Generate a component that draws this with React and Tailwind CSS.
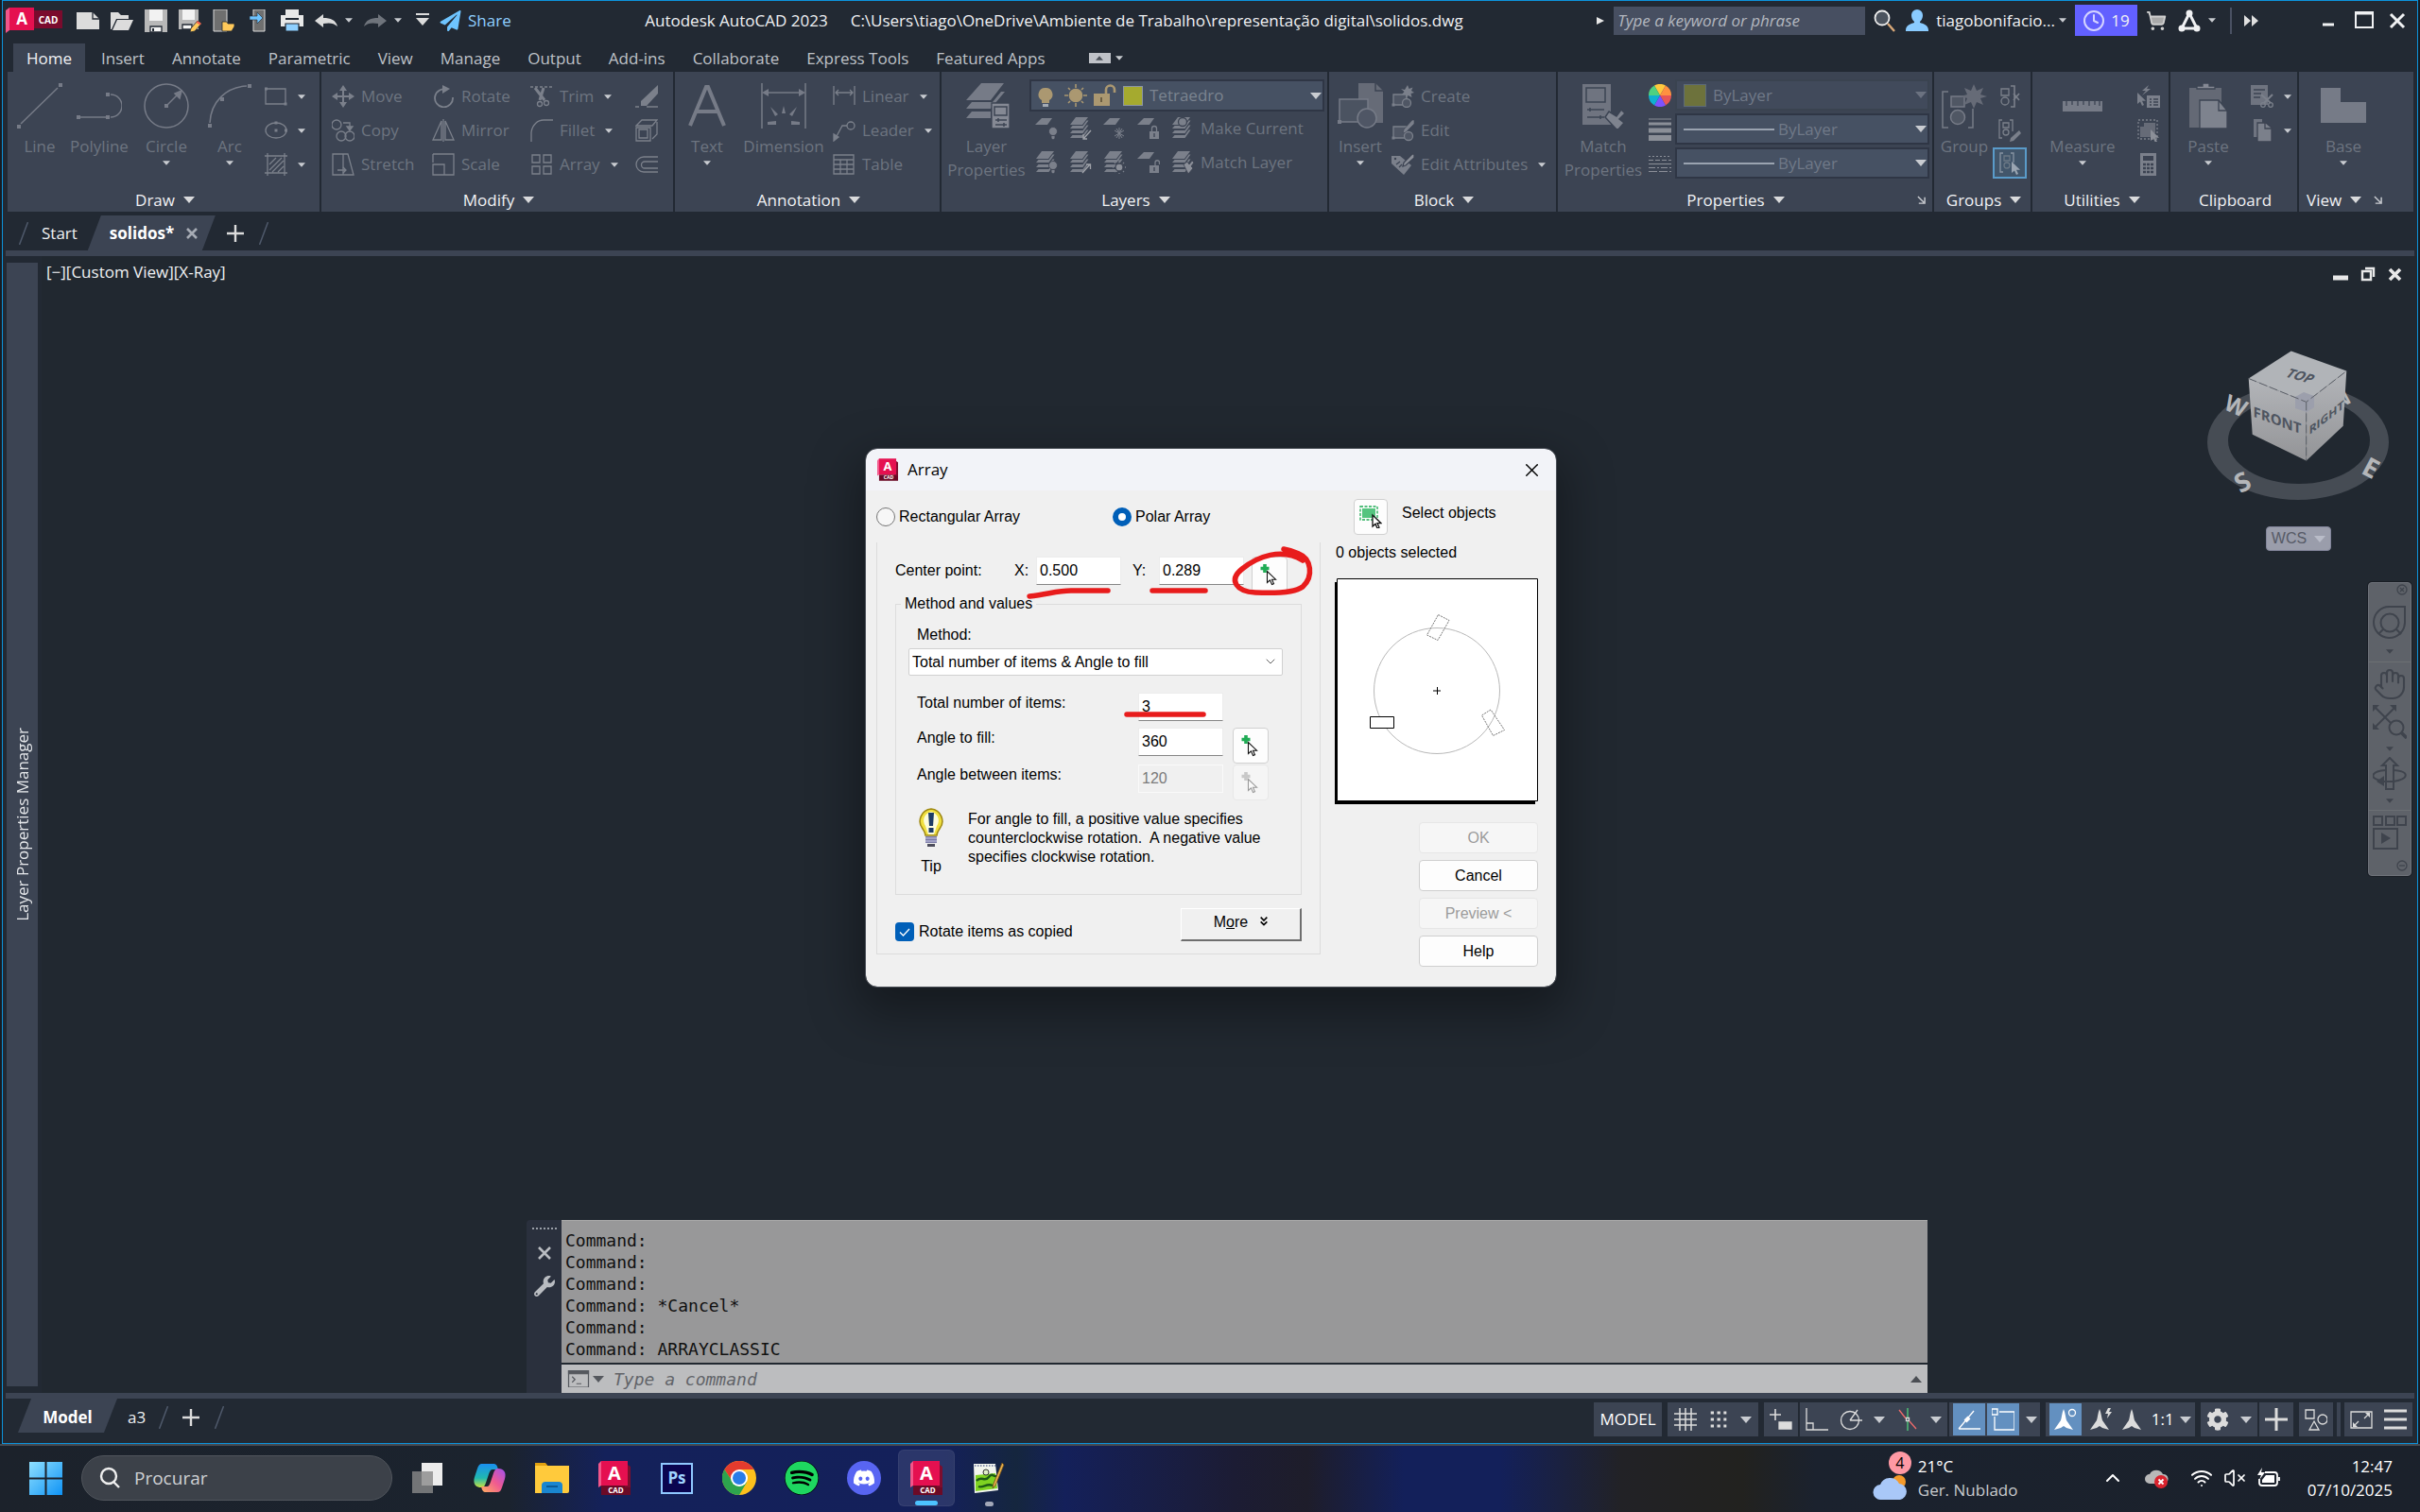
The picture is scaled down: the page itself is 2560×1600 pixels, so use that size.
import { ChevronDown, ChevronUp, Clock, Hand, ShoppingCart, Wifi, VolumeX, X } from 'lucide-react'
import { FaDiscord, FaSpotify, FaCog, FaPaperPlane, FaWrench } from 'react-icons/fa'

/* ---------- small pieces ---------- */

function Caret({ className = 'text-[#c9ccd1]', big }) {
  return (
    <svg viewBox="0 0 12 7" className={`shrink-0 ${big ? 'w-3 h-[7px]' : 'w-2 h-[5px]'} ${className}`} fill="currentColor">
      <path d="M0 0h12L6 7z" />
    </svg>
  )
}

function Ico({ s = 'w-6 h-6', box = 24, className = '', sw = 1.3, children }) {
  return (
    <svg viewBox={`0 0 ${box} ${box}`} className={`shrink-0 ${s} ${className}`} fill="none" stroke="currentColor" strokeWidth={sw}>
      {children}
    </svg>
  )
}

const Dot = ({ x, y, r = 1.5 }) => <rect x={x - r} y={y - r} width={r * 2} height={r * 2} fill="currentColor" stroke="none" />
const cursor = 'M0 0v12l3-2.6 2 4.6 2-.9-2-4.4h4z'

function Big({ label, label2, icon, caret, className }) {
  return (
    <button className={`flex flex-col items-center pt-1 text-[#6d7480] ${className}`}>
      <span className="h-12 flex items-center text-[#767b87]">{icon}</span>
      <span className="mt-[6px] leading-[25px] whitespace-nowrap">{label}</span>
      {label2 && <span className="leading-[25px] whitespace-nowrap">{label2}</span>}
      {caret && <Caret className="mt-[3px] text-[#c9ccd1]" />}
    </button>
  )
}

function Small({ icon, label, caret, name }) {
  return (
    <button aria-label={name} className="h-9 flex items-center gap-[7px] text-[#6d7480] whitespace-nowrap">
      <span className="text-[#7b808b]">{icon}</span>
      {label}
      {caret && <Caret className="ml-1 text-[#c9ccd1]" />}
    </button>
  )
}

function Panel({ title, className, caret = true, launcher, children }) {
  return (
    <section className={`flex flex-col border-r-2 border-[#222933] ${className}`}>
      <div className="flex items-start h-[122px] pt-2">{children}</div>
      <div className={`relative h-[26px] pt-px flex items-center justify-center gap-[9px] text-[#f0f1f3] ${launcher ? 'pr-5' : 'pl-[3px]'}`}>
        {title}
        {caret && <Caret big className="text-[#d9dadc]" />}
        {launcher && (
          <Ico s="w-[9px] h-[9px]" box={10} sw={1.6} className="absolute right-[7px] top-[9px] text-[#c9ccd1]">
            <path d="M1 1l7 7M9 2v7H2" />
          </Ico>
        )}
      </div>
    </section>
  )
}

/* ---------- layer icons ---------- */

const Sheet = ({ y = 1 }) => <path d={`M7 ${y}h11l-5 7H0z`} fill="currentColor" stroke="none" />
const Sheets = () => (
  <g fill="currentColor" stroke="none">
    <path d="M7 0h13l-6 8H1zM3.500 9h11l4-5.500h2l-6 8.500H1zM3.500 14h11l4-5.500h2l-6 8.500H1zM3.500 19h11l4-5.500h2l-6 8.500H1z" />
  </g>
)
const MiniBulb = () => (
  <g fill="#7b808b" stroke="#3c4352" strokeWidth=".8">
    <circle cx="19" cy="15" r="4.500" />
    <path d="M17 19.500h4v3l-2 1.500-2-1.500z" />
  </g>
)
const MiniLock = ({ open }) => (
  <g>
    <rect x="13" y="15" width="10" height="8" fill="currentColor" stroke="none" />
    <path d={open ? 'M19 15v-3a2.200 2.200 0 0 1 4.500 0v2' : 'M15.500 15v-3a2.500 2.500 0 0 1 5 0v3'} />
    <path d="M18 17v4" stroke="#3c4352" />
  </g>
)

const layerRow1 = [
  ['Off', <><Sheet /><MiniBulb /></>],
  ['Isolate', <><Sheets /><path d="M23 14l-8 9m0-5v5h4" stroke="#a0a3aa" /></>],
  ['Freeze', <><Sheet /><path d="M17 11v12M12 14l10 6M22 14l-10 6M14 12l6 10M20 12l-6 10" strokeWidth="1" /></>],
  ['Lock', <><Sheet /><MiniLock /></>],
]
const layerRow2 = [
  ['Turn all on', <><Sheets /><MiniBulb /></>],
  ['Unisolate', <><Sheets /><path d="M14 23l8-9m-4 0h4.500v5" stroke="#a0a3aa" /></>],
  ['Thaw all', <><Sheets /><circle cx="17" cy="17" r="4" fill="#8b8f98" stroke="#3c4352" /><path d="M17 9v2M17 23v1M10 17h1M23 17h1M12 12l1 1M21 21l1 1M22 12l-1 1M12 22l1-1" /></>],
  ['Unlock', <><Sheet /><MiniLock open /></>],
]

/* ---------- title bar ---------- */

function AcadMark({ className, cad = true }) {
  return (
    <svg viewBox="0 0 34 36" className={className}>
      <path d="M3 26h31v10H3z" fill="#6b0a26" />
      <path d="M28 2l6 4v22h-6z" fill="#7d0d2e" />
      <path d="M3 0h28v26H3z" fill="#e51050" />
      <path d="M3 0v26l-3 2V3z" fill="#f2568a" />
      <text x="17" y="20" textAnchor="middle" fontSize="20" fontWeight="700" fill="#fff" fontFamily="Open Sans, sans-serif">A</text>
      {cad && <text x="18.500" y="34" textAnchor="middle" fontSize="8" fontWeight="700" fill="#fff" fontFamily="Open Sans, sans-serif">CAD</text>}
    </svg>
  )
}

function TitleBar() {
  return (
    <header className="h-[45px] pb-1 flex items-center text-[#f0f1f3] shrink-0">
      <div className="flex items-start w-[78px] pl-[3px]">
        <svg viewBox="0 0 60 27" className="w-[60px] h-[27px]" aria-label="AutoCAD">
          <path d="M30 3h30v19H30z" fill="#7a0b2d" />
          <path d="M4 0h26v24H4z" fill="#e51050" />
          <path d="M0 3l4-3v24l-4 3z" fill="#f2568a" />
          <text x="17" y="18" textAnchor="middle" fontSize="17" fontWeight="700" fill="#fff" fontFamily="Open Sans, sans-serif">A</text>
          <text x="45" y="16.500" textAnchor="middle" fontSize="10" fontWeight="700" fill="#fff" fontFamily="Open Sans, sans-serif">CAD</text>
        </svg>
      </div>

      <div className="flex items-center gap-3 text-[#dcdcdc]">
        <button aria-label="New"><Ico><path d="M0 3h17l7 7v11H0z" fill="currentColor" stroke="none" /><path d="M17 3v7h7" stroke="#222933" /></Ico></button>
        <button aria-label="Open"><Ico><path d="M0 3h8l3 3h8v4H6L1 21H0zM7 11h17l-5 11H2z" fill="currentColor" stroke="none" /></Ico></button>
        <button aria-label="Save"><Ico><path d="M0 0h24v24H0z" fill="#b8b8b8" stroke="none" /><path d="M5 0h14v12H5z" fill="#f2f2f2" stroke="none" /><path d="M6 18h12v6H6z" fill="#f5f5f5" stroke="#222933" /><path d="M8 20h2v3H8z" fill="#222933" stroke="none" /></Ico></button>
        <button aria-label="Save as"><Ico><path d="M0 0h21v21H0z" fill="#b8b8b8" stroke="none" /><path d="M4 0h13v11H4z" fill="#f2f2f2" stroke="none" /><path d="M4 16h10v5H4z" fill="#f5f5f5" stroke="#222933" /><path d="M20 12l4 3-7 8-5 1 1-4z" fill="#ffc95a" stroke="#222933" strokeWidth=".8" /><path d="M20 12l4 3-1.500 1.500-4-2.800z" fill="#f2604f" stroke="none" /></Ico></button>
        <button aria-label="Open from mobile"><Ico><path d="M1 0h14v23H1z" fill="#6f6f6f" stroke="#dcdcdc" strokeWidth="1" /><path d="M10 13h5l1 2h7v3l-3 5H10z" fill="#ffc95a" stroke="#222933" strokeWidth=".8" /></Ico></button>
        <button aria-label="Save to mobile"><Ico><path d="M7 0h12v23H7z" fill="#6f6f6f" stroke="#dcdcdc" strokeWidth="1" /><path d="M3 7h8V3l6 6-6 6v-4H3z" fill="#6ec4ff" stroke="#222933" strokeWidth=".6" /></Ico></button>
        <button aria-label="Plot"><Ico><path d="M5 0h14v6H5zM0 6h24v12H0z" fill="#e8e8e8" stroke="none" /><path d="M5 9h14v2H5z" fill="#222933" stroke="none" /><path d="M5 15h14v8H5z" fill="#8fd0ff" stroke="#222933" strokeWidth="1.200" /></Ico></button>
        <div className="flex items-center gap-2">
          <button aria-label="Undo"><Ico><path d="M0 12l9-7v4c8 0 13 2 15 9-4-4-9-4-15-3v4z" fill="currentColor" stroke="none" /></Ico></button>
          <Caret />
        </div>
        <div className="flex items-center gap-2 text-[#6f747c]">
          <button aria-label="Redo"><Ico><path d="M24 12l-9-7v4C7 9 2 11 0 18c4-4 9-4 15-3v4z" fill="currentColor" stroke="none" /></Ico></button>
          <Caret />
        </div>
        <button aria-label="Customize"><Ico s="w-4 h-6 mx-0.5" box={16}><path d="M1 1h14" strokeWidth="2" /><path d="M1 5h14l-7 8z" fill="currentColor" stroke="none" /></Ico></button>
        <button className="-ml-1 flex items-center gap-[7px] text-[#8fcfff]">
          <FaPaperPlane className="w-[23px] h-[22px] text-[#6ec4ff]" /> Share
        </button>
      </div>

      <h1 className="flex-1 flex justify-center gap-6 whitespace-nowrap">
        <span>Autodesk AutoCAD 2023</span>
        <span>C:\Users\tiago\OneDrive\Ambiente de Trabalho\representação digital\solidos.dwg</span>
      </h1>

      <div className="flex items-center">
        <Ico s="w-2 h-3" box={12} className="mr-[10px]"><path d="M0 0l12 6-12 6z" fill="#e8e8e8" stroke="none" /></Ico>
        <input aria-label="Search" placeholder="Type a keyword or phrase" className="w-[266px] h-[30px] bg-[#474f61] px-1 italic placeholder:text-[#b3b7bf]" />
        <Ico s="w-6 h-6 ml-[9px]"><circle cx="9" cy="9" r="7.500" fill="#4c545f" stroke="#eee" strokeWidth="1.800" /><path d="M15 15l7 8" stroke="#d8a878" strokeWidth="2.400" /></Ico>
        <button className="flex items-center ml-[10px]">
          <Ico s="w-6 h-6 mr-2"><path d="M12 0a6 6 0 0 1 6 6c0 3-1 5-3 7v1c4 1 9 3 9 8v1H0v-1c0-5 5-7 9-8v-1c-2-2-3-4-3-7a6 6 0 0 1 6-6z" fill="#8acbff" stroke="none" /></Ico>
          <span className="mr-1">tiagobonifacio...</span>
          <Caret />
        </button>
        <button className="ml-[9px] h-[33px] w-[66px] bg-[#6260ff] flex items-center justify-center gap-[6px]">
          <Clock className="w-[24px] h-[24px] text-[#d5d4ff]" /> 19
        </button>
        <button aria-label="Cart" className="ml-[9px]"><ShoppingCart className="w-[22px] h-[22px] text-[#d0d0d0] fill-[#aaa]" /></button>
        <button aria-label="Autodesk App" className="flex items-center gap-2 ml-3">
          <Ico sw={3}><path d="M12 4L4 20h16z" /><circle cx="12" cy="4" r="2" fill="currentColor" /><circle cx="4" cy="20" r="2" fill="currentColor" /><circle cx="20" cy="20" r="2" fill="currentColor" /></Ico>
          <Caret />
        </button>
        <span className="w-[2px] h-7 bg-[#4a5163] ml-[15px]" />
        <Ico s="w-4 h-4" box={16} className="ml-[13px]"><path d="M0 2l7 6-7 6zM8 2l7 6-7 6z" fill="#e0e0e0" stroke="none" /></Ico>
        <button aria-label="Minimize" className="ml-[67px]"><Ico s="w-3 h-5" box={12}><path d="M0 10h12" strokeWidth="3" /></Ico></button>
        <button aria-label="Maximize" className="ml-[22px]"><Ico s="w-5 h-5" box={20} sw={2}><path d="M1 1h18v16H1z" /><path d="M1 2h18" strokeWidth="3" /></Ico></button>
        <button aria-label="Close" className="ml-4 mr-3"><Ico s="w-[18px] h-[18px]" box={18} sw={3}><path d="M2 2l14 14M16 2L2 16" /></Ico></button>
      </div>
    </header>
  )
}

const ribbonTabs = ['Insert', 'Annotate', 'Parametric', 'View', 'Manage', 'Output', 'Add-ins', 'Collaborate', 'Express Tools', 'Featured Apps']

function RibbonTabs() {
  return (
    <nav className="h-[30px] flex items-stretch pl-[11px] text-[#bfc2c8] shrink-0">
      <button className="px-[14px] mr-[2px] pt-0.5 bg-[#3c4453] text-[#f0f1f3]">Home</button>
      {ribbonTabs.map((t) => (
        <button key={t} className="pl-[15px] pr-[14px] pt-0.5 whitespace-nowrap">{t}</button>
      ))}
      <button aria-label="Minimize ribbon" className="flex items-center gap-[5px] ml-[32px]">
        <span className="w-[23px] h-[11px] bg-[#bfc2c8] flex items-center justify-center">
          <Caret className="rotate-180 text-[#4a4f58]" />
        </span>
        <Caret />
      </button>
    </nav>
  )
}

/* ---------- ribbon ---------- */

function PropSelect({ label, dim, children }) {
  return (
    <div className={`relative h-[33px] flex items-center gap-1 pl-[7px] border-2 ${dim ? 'bg-[#414a5b] border-[#3a4350]' : 'bg-[#465163] border-[#2f3645]'}`}>
      {children}
      <select aria-label={label} className="flex-1 min-w-0 appearance-none bg-transparent text-[#707988]">
        <option>ByLayer</option>
      </select>
      <Caret big className={`mr-px ${dim ? 'text-[#6b7280]' : 'text-[#c9ccd1]'}`} />
    </div>
  )
}

function Ribbon() {
  return (
    <div className="ml-[5px] mr-1 h-[148px] bg-[#3c4453] flex shrink-0">
      <Panel title="Draw" className="w-[332px]">
        <Big className="w-[60px] ml-1" label="Line" icon={<Ico s="w-12 h-12" box={48} sw={1.5}><path d="M4 43L43 5" /><Dot x={2} y={46} r={2} /><Dot x={46} y={2} r={2} /></Ico>} />
        <Big className="w-[66px]" label="Polyline" icon={<Ico s="w-12 h-12" box={48} sw={1.5}><path d="M4 36h28M36 12a12 12 0 0 1 0 24" /><Dot x={2} y={36} r={2} /><Dot x={33} y={36} r={2} /><Dot x={33} y={12} r={2} /></Ico>} />
        <Big className="w-[76px]" label="Circle" caret icon={<Ico s="w-12 h-12" box={48} sw={1.5}><circle cx="24" cy="24" r="23" /><path d="M24 24l13-13" /><path d="M40 8l-2 8-5-5z" fill="currentColor" /><Dot x={24} y={24} r={2} /></Ico>} />
        <Big className="w-[58px]" label="Arc" caret icon={<Ico s="w-12 h-12" box={48} sw={1.5}><path d="M3 42C4 20 20 4 42 3" /><Dot x={3} y={45} r={2} /><Dot x={16} y={17} r={2} /><Dot x={45} y={3} r={2} /></Ico>} />
        <div className="flex flex-col ml-2">
          <Small name="Rectangle" caret icon={<Ico><path d="M1 4h21v16H1z" /><Dot x={1.5} y={4} /><Dot x={22} y={20} /></Ico>} />
          <Small name="Ellipse" caret icon={<Ico><ellipse cx="12" cy="12" rx="11" ry="8" /><Dot x={12} y={12} /><Dot x={12} y={4} /><Dot x={22.5} y={12} /></Ico>} />
          <Small name="Hatch" caret icon={<Ico><path d="M3 0v24M21 0v24M0 3h24M0 21h24M5 12l7-7M5 18L18 5M8 20L20 8M14 20l6-6" /></Ico>} />
        </div>
      </Panel>

      <Panel title="Modify" className="w-[374px]">
        <div className="flex flex-col w-[106px] ml-[11px]">
          <Small label="Move" icon={<Ico sw={2}><path d="M12 4v16M4 12h16" /><path d="M12 0l4 6H8zM12 24l4-6H8zM0 12l6-4v8zM24 12l-6-4v8z" fill="currentColor" stroke="none" /></Ico>} />
          <Small label="Copy" icon={<Ico><circle cx="5" cy="6" r="5" /><circle cx="10" cy="18" r="5" /><circle cx="19" cy="18" r="5" /><path d="M12 4h7v5" /><path d="M19 12l-3-4h6z" fill="currentColor" /></Ico>} />
          <Small label="Stretch" icon={<Ico><path d="M1 1h11v22H1zM12 1h5l6 22H12" /><path d="M6 18h9m-3-3l3 3-3 3" /></Ico>} />
        </div>
        <div className="flex flex-col w-[104px]">
          <Small label="Rotate" icon={<Ico sw={1.8}><path d="M16 5a9.500 9.500 0 1 0 6 8" /><path d="M11 0l8 4-8 5z" fill="currentColor" stroke="none" /></Ico>} />
          <Small label="Mirror" icon={<Ico><path d="M10 2v20H1zM14 2v20h9z" /><path d="M12 0v24" /></Ico>} />
          <Small label="Scale" icon={<Ico><path d="M1 1h22v22H12M1 10V1M1 12h12v11H1z" /></Ico>} />
        </div>
        <div className="flex flex-col w-[111px]">
          <Small label="Trim" caret icon={<Ico><path d="M0 2h24" strokeDasharray="3 2" /><path d="M5 3l10 13M14 3l-4 13" strokeWidth="3" /><circle cx="10" cy="20" r="2.500" /><circle cx="17" cy="19" r="2.500" /></Ico>} />
          <Small label="Fillet" caret icon={<Ico><path d="M1 24V14C2 6 8 1 14 1h10" /></Ico>} />
          <Small label="Array" caret icon={<Ico><path d="M2 2h8v8H2zM14 2h8v8h-8zM2 14h8v8H2zM14 14h8v8h-8z" /></Ico>} />
        </div>
        <div className="flex flex-col">
          <Small name="Erase" icon={<Ico><path d="M24 0v9L12 22H6V17z" fill="currentColor" stroke="none" /><path d="M0 23h4M12 23h12" /></Ico>} />
          <Small name="Explode" icon={<Ico><path d="M1 9h15v14H1zM4 11h9v9H4zM1 7l6-6h16l-5 6zM18 21l5-5V3" /></Ico>} />
          <Small name="Offset" icon={<Ico><path d="M24 4H9a8 8 0 0 0 0 16h15M24 9H10a3.500 3.500 0 0 0 0 7h14" /></Ico>} />
        </div>
      </Panel>

      <Panel title="Annotation" className="w-[282px]">
        <Big className="w-[68px]" label="Text" caret icon={<Ico s="w-12 h-12" box={48} sw={4}><path d="M6 45L23 4h2l17 41M12 30h24" /></Ico>} />
        <Big className="w-[94px]" label="Dimension" icon={<Ico s="w-12 h-12" box={48} sw={1.5}><path d="M1 0v48M47 0v48M4 10h40" /><path d="M1 10l7-4v8zM47 10l-7-4v8zM24 24l2 8h-4zM10 25l8 8-3 2zM38 25l-8 8 3 2zM7 41l9-1v4H7zM41 41l-9-1v4h9z" fill="currentColor" stroke="none" /></Ico>} />
        <div className="flex flex-col ml-[5px]">
          <Small label="Linear" caret icon={<Ico><path d="M1 1v20M23 1v20M3 8h18M6 5L3 8l3 3M18 5l3 3-3 3" /></Ico>} />
          <Small label="Leader" caret icon={<Ico><circle cx="19" cy="7" r="4" /><path d="M15 7h-5L3 20" /><path d="M1 23v-7l5 3z" fill="currentColor" /></Ico>} />
          <Small label="Table" icon={<Ico><path d="M1 2h21v20H1zM1 7h21M1 12h21M1 17h21M8 7v15M15 7v15" /></Ico>} />
        </div>
      </Panel>

      <Panel title="Layers" className="w-[410px]">
        <Big className="w-[91px] ml-[2px]" label="Layer" label2="Properties" icon={<Ico s="w-12 h-12" box={48}><path d="M18 0h24L28 18H2zM8 20h22l9-11h4L28 27H2zM8 30h20v7H2z" fill="currentColor" stroke="none" /><path d="M29 21h19v27H29z" fill="#858994" stroke="#3c4453" /><path d="M32 25h13v9H32zM33 39h12M33 44h12M36 37v4M42 42v4" stroke="#3c4453" strokeWidth="1.500" /></Ico>} />
        <div className="flex flex-col">
          <div className="h-[34px] w-[312px] bg-[#465163] border-2 border-[#2f3645] flex items-center gap-3 pl-[7px] pr-px">
            <Ico s="w-4 h-6" box={16}><path d="M8 0a7 7 0 0 1 4 13v3H4v-3A7 7 0 0 1 8 0z" fill="#ab9871" stroke="none" /><path d="M5 17h6v4l-3 2-3-2z" fill="#a3aab4" stroke="none" /></Ico>
            <div className="flex items-center gap-[7px]">
              <Ico sw={1.6}><g stroke="#ab9871"><circle cx="12" cy="12" r="6.500" fill="#ab9871" /><path d="M12 0v4M12 20v4M0 12h4M20 12h4M4 4l2 2M18 18l2 2M20 4l-2 2M4 20l2-2" /></g></Ico>
              <Ico><path d="M0 10h17v13H0z" fill="#ab9871" stroke="none" /><path d="M13 10V6a4.500 4.500 0 0 1 9 0v3" stroke="#ab9871" strokeWidth="2.600" /><path d="M8 14v5" stroke="#4a3f2a" /></Ico>
              <span className="w-[21px] h-[21px] bg-[#a5aa2f] border border-[#8d96a3]" />
              <select aria-label="Layer" className="w-[150px] appearance-none bg-transparent text-[#7b8490]">
                <option>Tetraedro</option>
              </select>
            </div>
            <Caret big className="ml-auto text-[#c9ccd1]" />
          </div>
          {[[layerRow1, 'Make Current'], [layerRow2, 'Match Layer']].map(([row, label], i) => (
            <div key={label} className="flex h-9 items-center gap-3 pl-[6px] text-[#7b808b]">
              {row.map(([name, g]) => <button key={name} aria-label={name}><Ico>{g}</Ico></button>)}
              <Small label={label} icon={<Ico><Sheets />{i === 0 ? <circle cx="12" cy="5" r="4.500" fill="currentColor" stroke="#3c4352" /> : <path d="M13 14l4-3 2 3 3-4 2 2-3 4 2 2-5 6z" fill="#8b8f98" stroke="#3c4352" strokeWidth=".8" />}</Ico>} />
            </div>
          ))}
        </div>
      </Panel>

      <Panel title="Block" className="w-[242px]">
        <Big className="w-[66px]" label="Insert" caret icon={<Ico s="w-12 h-12" box={48} sw={1.5}><path d="M22 0h18l8 8v34H22z" fill="#666b77" stroke="none" /><path d="M40 0v8h8" stroke="#3c4453" /><path d="M2 17h30v24H2z" fill="#4b5361" /><circle cx="31" cy="37" r="10" fill="#4f5665" /><Dot x={2} y={41} r={2} /></Ico>} />
        <div className="flex flex-col">
          <Small label="Create" icon={<Ico><path d="M2 10h14v11H2z" fill="#4f5664" /><circle cx="16" cy="19" r="4.500" fill="#4f5664" /><path d="M17 0l1.500 4 4-1.500L21 6l3 2-3.500 1 1 4-4-2-2 3-.5-4-4 0 2.500-3L10 4l4 1z" fill="currentColor" stroke="none" /><Dot x={2} y={21} /></Ico>} />
          <Small label="Edit" icon={<Ico><path d="M2 8h14v12H2z" fill="#4f5664" /><circle cx="18" cy="18" r="4.500" fill="#4f5664" /><path d="M24 1v4l-9 9-3 1 1-4 9-10z" fill="currentColor" stroke="#3c4352" strokeWidth=".6" /><Dot x={2} y={20} /></Ico>} />
          <Small label="Edit Attributes" caret icon={<Ico><path d="M0 3h9l12 10-8 10L0 11z" fill="currentColor" stroke="none" /><path d="M24 1v4l-9 8-3 1 1-4 9-9zM5 12l4-3M8 15l3-3" fill="#8b8f98" stroke="#3c4352" /><circle cx="4" cy="6" r="1.200" fill="#3c4352" stroke="none" /></Ico>} />
        </div>
      </Panel>

      <Panel title="Properties" className="w-[398px]" launcher>
        <Big className="w-[96px]" label="Match" label2="Properties" icon={<Ico s="w-12 h-12" box={48} sw={1.5}><path d="M2 1h30v43H2z" fill="#6f7480" stroke="none" /><path d="M6 5h20v15H6zM7 28h18M7 36h18M10 26v4M21 34v4" stroke="#3c4453" /><path d="M30 30l8 5 5-7 4 4-6 6 5 4-7 8-13-14z" fill="#7e838e" stroke="#3c4453" /></Ico>} />
        <div className="flex-1 grid grid-cols-[28px_1fr] mr-[3px] gap-y-[3px] items-center">
          <svg viewBox="-12 -12 24 24" className="w-6 h-6">
            <path d="M0 0L-6-10.400A12 12 0 0 1 6-10.400z" fill="#ffc83d" />
            <path d="M0 0L6-10.400A12 12 0 0 1 12 0z" fill="#ff9140" />
            <path d="M0 0H12A12 12 0 0 1 6 10.400z" fill="#e85656" />
            <path d="M0 0L6 10.400A12 12 0 0 1-6 10.400z" fill="#7c52ff" />
            <path d="M0 0L-6 10.400A12 12 0 0 1-12 0z" fill="#10b0d0" />
            <path d="M0 0H-12A12 12 0 0 1-6-10.400z" fill="#4fd080" />
          </svg>
          <PropSelect label="Object color" dim><span className="w-6 h-6 mr-[3px] bg-[#6d723c] border border-[#5d6a78]" /></PropSelect>
          <Ico className="text-[#8b8f98]"><path d="M0 1h24" strokeWidth="1" /><path d="M0 6h24" strokeWidth="3" /><path d="M0 13h24" strokeWidth="5" /><path d="M0 21h24" strokeWidth="6" /></Ico>
          <PropSelect label="Lineweight"><span className="w-24 h-[2px] bg-[#9aa3b0]" /></PropSelect>
          <Ico className="text-[#8b8f98]" sw={1}><path d="M0 4.500h24" strokeDasharray="2 2" /><path d="M0 8.500h24" strokeDasharray="5 2" /><path d="M0 12.500h24" /><path d="M0 16.500h24" strokeDasharray="7 2 2 2" /><path d="M0 20.500h24" strokeDasharray="9 2" /></Ico>
          <PropSelect label="Linetype"><span className="w-24 h-[2px] bg-[#9aa3b0]" /></PropSelect>
        </div>
      </Panel>

      <Panel title="Groups" className="w-[104px]">
        <Big className="w-[60px] ml-[2px]" label="Group" icon={<Ico s="w-12 h-12" box={48} sw={1.5}><path d="M7 9H1v38h6M28 47h5V27" /><path d="M10 14h14v11H10z" fill="#505764" /><circle cx="17" cy="36" r="7.500" fill="#505764" /><path d="M34 1l3 7 7-3-3 7 7 2-7 2 3 7-7-3-3 7-3-7-7 3 3-7-7-2 7-2-3-7 7 3z" fill="#666b77" stroke="none" /></Ico>} />
        <div className="flex flex-col">
          <button aria-label="Ungroup" className="h-9 flex items-center justify-center text-[#7b808b]"><Ico><path d="M3 4h8v7H3z" /><circle cx="7" cy="17" r="4" /><path d="M13 1h4v22h-4M16 9l6 7M22 9l-6 7" strokeWidth="1.600" /></Ico></button>
          <button aria-label="Group edit" className="h-9 flex items-center justify-center text-[#7b808b]"><Ico><path d="M4 1H1v19h3M12 1h3v12" /><path d="M5 4h6v5H5z" /><circle cx="8" cy="14" r="3" /><path d="M22 12l2 3-8 8-4 1 1-4z" fill="currentColor" stroke="none" /></Ico></button>
          <button aria-label="Group selection" className="w-9 h-[33px] bg-[#42566b] border-2 border-[#5a9bc9] flex items-center justify-center text-[#8894a3]"><Ico><path d="M5 1H2v20h3M13 1h3v10" /><path d="M6 4h6v5H6z" stroke="#6b7885" /><circle cx="9" cy="14" r="3" stroke="#6b7885" /><path d={cursor} transform="translate(14 10)" fill="#9aa5b2" stroke="none" /></Ico></button>
        </div>
      </Panel>

      <Panel title="Utilities" className="w-[146px]">
        <Big className="w-[106px]" label="Measure" caret icon={<Ico s="w-12 h-12" box={48}><path d="M3 19h42v11H3z" fill="currentColor" stroke="none" /><path d="M7 19v5M13 19v4M19 19v5M25 19v4M31 19v5M37 19v4M42 19v5" stroke="#3c4453" /></Ico>} />
        <div className="flex flex-col ml-[5px]">
          <Small name="Quick select" icon={<Ico><path d="M10 11h14v13H10z" fill="currentColor" stroke="none" /><path d="M13 15h2M17 15h5M13 18h2M17 18h5M13 21h2M17 21h5" stroke="#3c4352" /><path d="M12 0L5 6h4l-4 5 9-7h-4z" fill="currentColor" stroke="none" /><path d={cursor} transform="translate(0 8)" fill="currentColor" stroke="none" /></Ico>} />
          <Small name="Select all" icon={<Ico><path d="M1 1h20v20H1z" strokeDasharray="2 2" /><path d="M3 8h11v11H3zM7 4h12v11H7z" fill="#666b77" stroke="none" /><path d={cursor} transform="translate(14 11)" fill="#8b8f98" stroke="none" /></Ico>} />
          <Small name="Calculator" icon={<Ico><path d="M3 0h17v24H3z" fill="currentColor" stroke="none" /><path d="M6 3h11v5H6z" fill="#3c4352" stroke="none" /><path d="M6 12h11M6 16h11M6 20h11" stroke="#3c4352" strokeWidth="2.500" strokeDasharray="3 1" /></Ico>} />
        </div>
      </Panel>

      <Panel title="Clipboard" className="w-[136px]" caret={false}>
        <Big className="w-[80px]" label="Paste" caret icon={<Ico s="w-12 h-12" box={48}><path d="M4 5h34v42H4z" fill="#646975" stroke="none" /><path d="M12 6V3h6V0h7v3h6v3z" fill="#858994" stroke="#3c4453" /><path d="M15 18h20l9 11v19H15z" fill="#7e838e" stroke="#3c4453" /><path d="M35 18v11h9" stroke="#3c4453" /></Ico>} />
        <div className="flex flex-col ml-[5px]">
          <Small name="Cut" caret icon={<Ico><path d="M0 0h18v21H0z" fill="#6f7480" stroke="none" /><path d="M3 5h12M3 9h8M3 13h7" stroke="#3c4352" /><path d="M11 10l10 9M23 10l-9 9" strokeWidth="2" /><circle cx="13" cy="21" r="2.300" /><circle cx="21" cy="21" r="2.300" /></Ico>} />
          <Small name="Copy clip" caret icon={<Ico><path d="M3 0h9v19H3z" fill="#6f7480" stroke="none" /><path d="M7 4h9l6 5v15H7z" fill="currentColor" stroke="#3c4352" /><path d="M15 4v6h7" stroke="#3c4352" /></Ico>} />
        </div>
      </Panel>

      <section className="flex-1 flex flex-col">
        <div className="h-[122px] pt-2"><Big className="w-[94px]" label="Base" caret icon={<Ico s="w-12 h-12" box={48}><path d="M0 5h21v15h27v22H0z" fill="currentColor" stroke="none" /></Ico>} /></div>
        <div className="h-[26px] pt-px flex items-center gap-[9px] pl-2 text-[#f0f1f3]">
          View <Caret big className="text-[#d9dadc]" />
          <Ico s="w-[9px] h-[9px]" box={10} sw={1.6} className="ml-1 text-[#c9ccd1]"><path d="M1 1l7 7M9 2v7H2" /></Ico>
        </div>
      </section>
    </div>
  )
}

/* ---------- drawing area ---------- */

function Slash() {
  return (
    <svg viewBox="0 0 10 24" className="w-[10px] h-6 shrink-0" stroke="#4f596b" strokeWidth="1.500">
      <path d="M9.500 0L.5 24" />
    </svg>
  )
}

function DocTabs() {
  return (
    <div className="h-[41px] pt-1 flex items-center text-[#f0f1f3] shrink-0">
      <span className="ml-[17px]"><Slash /></span>
      <button className="ml-[14px]">Start</button>
      <div className="ml-[11px] h-[37px] w-[135px] bg-[#3c4453] flex items-center pl-[23px] gap-[13px] [clip-path:polygon(14px_0,100%_0,calc(100%-14px)_100%,0_100%)]">
        <button className="font-bold text-white">solidos*</button>
        <button aria-label="Close tab"><Ico s="w-3 h-3" box={12} sw={2.6} className="text-[#a6abb4]"><path d="M1 1l10 10M11 1L1 11" /></Ico></button>
      </div>
      <button aria-label="New tab" className="ml-3"><Ico s="w-[18px] h-[18px]" box={18} sw={2.4} className="text-[#dcdcdc]"><path d="M9 0v18M0 9h18" /></Ico></button>
      <span className="ml-4"><Slash /></span>
    </div>
  )
}

function ViewCube() {
  return (
    <svg viewBox="0 0 200 180" className="w-[200px] h-[180px]" fontFamily="Open Sans, sans-serif" fontWeight="700">
      <defs>
        <linearGradient id="face" x1="0" y1="0" x2="0" y2="1">
          <stop offset="0" stopColor="#b3b5b9" />
          <stop offset="1" stopColor="#939497" />
        </linearGradient>
      </defs>
      <path fillRule="evenodd" fill="#464c54" d="M4 108a96 61 0 1 0 192 0a96 61 0 1 0-192 0zM26 106a75 46 0 1 0 150 0a75 46 0 1 0-150 0z" />
      <text x="34" y="78" textAnchor="middle" fontSize="24" fill="#b4b6b9" transform="rotate(24 34 70)">W</text>
      <text x="147" y="70" textAnchor="middle" fontSize="20" fill="#b4b6b9" transform="rotate(-28 147 63)">N</text>
      <text x="41" y="160" textAnchor="middle" fontSize="28" fill="#b4b6b9" transform="rotate(-28 41 150)">S</text>
      <text x="177" y="145" textAnchor="middle" fontSize="28" fill="#b4b6b9" transform="rotate(28 177 135)">E</text>
      <path d="M92.700 11.600L151.300 32.600L108.700 65.400L47.700 40.500z" fill="#b1b4b8" />
      <path d="M47.700 40.500L108.700 65.400V127.500L51.700 99.800z" fill="url(#face)" />
      <path d="M151.300 32.600L108.700 65.400V127.500L147.700 90.700z" fill="url(#face)" />
      <path d="M97 60l9-5 11 4v12l-8 5-12-4z" fill="#9c9fac" />
      <path d="M47.700 40.500L108.700 65.400L151.300 32.600M108.700 65.400V127.500" fill="none" stroke="#5c6068" strokeDasharray="9 3" />
      <text textAnchor="middle" fontSize="14" fill="#4e5560" transform="translate(99 42) rotate(16) skewX(-24)">TOP</text>
      <text textAnchor="middle" fontSize="15" fill="#4e5560" transform="translate(78 90) skewY(20)">FRONT</text>
      <text textAnchor="middle" fontSize="12" fill="#4e5560" transform="translate(130 86) skewY(-38)">RIGHT</text>
    </svg>
  )
}

function NavBar() {
  return (
    <div className="w-[46px] h-[311px] rounded bg-[#5e6269] border border-[#6e727a] shadow-[0_0_0_1px_#181d24] text-[#3f444d] flex flex-col items-center">
      <Ico s="w-3 h-3" box={12} className="self-end mr-[3px] mt-[1px]"><circle cx="6" cy="6" r="5" /><path d="M4 4l4 4M8 4l-4 4" /></Ico>
      <button aria-label="Wheel" className="mt-[11px]"><Ico s="w-9 h-9" box={36} sw={2}><path d="M18 1h16v17A16.500 16.500 0 1 1 18 1z" /><circle cx="18" cy="18" r="9.500" /><path d="M11 25l-5 5M25 25l5 5" /></Ico></button>
      <Caret className="mt-[10px] text-[#3f444d]" />
      <span className="w-full h-px bg-[#6b6f73] mt-[8px]" />
      <button aria-label="Pan" className="mt-[5px]"><Hand className="w-9 h-9" strokeWidth={1.4} /></button>
      <button aria-label="Zoom" className="mt-1"><Ico s="w-9 h-9" box={36} sw={2}><path d="M2 2l22 22M24 2L2 24" /><path d="M0 0h7l-7 7zM25 0v7l-7-7zM0 26v-7l7 7z" fill="currentColor" stroke="none" /><circle cx="25" cy="24" r="7.500" fill="#5e6269" /><path d="M30 29l6 6" strokeWidth="3.500" /></Ico></button>
      <Caret className="mt-[8px] text-[#3f444d]" />
      <button aria-label="Orbit" className="mt-[6px]"><Ico s="w-9 h-9" box={36} sw={2}><path d="M14 34V9h-4l8-8 8 8h-4v25z" /><path d="M14 14C-3 15-3 23 8 25M22 14c17 1 17 9 0 12H8" /><path d="M12 20l-8 6 8 5z" fill="currentColor" stroke="none" /></Ico></button>
      <Caret className="mt-[8px] text-[#3f444d]" />
      <span className="w-full h-px bg-[#6b6f73] mt-[7px]" />
      <button aria-label="ShowMotion" className="mt-[5px]"><Ico s="w-9 h-9" box={36} sw={2}><path d="M1 1h9v9H1zM14 1h9v9h-9zM26 1h9v9h-9zM1 14h25v21H1z" /><path d="M9 18l10 6-10 6z" fill="currentColor" stroke="none" /></Ico></button>
      <Ico s="w-3 h-3" box={12} className="self-end mr-[3px] mt-[11px]"><circle cx="6" cy="6" r="5" /><path d="M3 6h6" /></Ico>
    </div>
  )
}

const history = ['Command:', 'Command:', 'Command:', 'Command: *Cancel*', 'Command:', 'Command: ARRAYCLASSIC']

function CommandLine() {
  return (
    <div className="flex font-['DejaVu_Sans_Mono',monospace] text-[18px]">
      <div className="w-[37px] bg-[#2a303d] rounded-tl flex flex-col items-center text-[#b9bcc1]">
        <span className="w-[26px] border-t-2 border-dotted border-[#9a9fa8] mt-2" />
        <button aria-label="Close" className="mt-[17px]"><Ico s="w-4 h-4" box={16} sw={2.6}><path d="M2 2l12 12M14 2L2 14" /></Ico></button>
        <button aria-label="Customize command line" className="mt-4"><FaWrench className="w-[22px] h-[22px]" /></button>
      </div>
      <div className="flex-1">
        <div className="h-[151px] bg-[#989899] border-t border-[#aaa] px-1 pt-[9px] text-[#101010] leading-[23px]">
          {history.map((l, i) => <p key={i}>{l}</p>)}
        </div>
        <div className="mt-[2px] h-[30px] bg-[#bcbdbf] flex items-center px-[6px]">
          <Ico s="w-6 h-[18px]" box={24} sw={1.6} className="text-[#55585e]"><path d="M-2 0h28v24H-2z" /><path d="M-2 0h28v5H-2z" fill="currentColor" /><path d="M3 9l4 4-4 4M9 19h7" /></Ico>
          <Caret big className="ml-[3px] text-[#55585e]" />
          <input aria-label="Command" placeholder="Type a command" className="flex-1 ml-[10px] bg-transparent italic placeholder:text-[#626469]" />
          <Caret big className="rotate-180 text-[#4b4e54]" />
        </div>
      </div>
    </div>
  )
}

function Canvas() {
  return (
    <main className="flex-1 flex min-h-0">
      <aside className="w-[41px] pl-1 pt-[7px] pb-[7px]">
        <div className="w-[33px] h-full bg-[#3c4453] flex items-center justify-center text-[#e6e8eb]">
          <span className="[writing-mode:vertical-rl] rotate-180 whitespace-nowrap">Layer Properties Manager</span>
        </div>
      </aside>
      <div className="relative flex-1 bg-[#212830]">
        <p className="pl-[5px] pt-1 text-[#f0f1f3]">[−][Custom View][X-Ray]</p>
        <div className="absolute right-[15px] top-[11px] flex gap-[13px] text-[#e8e8e8]">
          <button aria-label="Minimize view"><Ico s="w-4 h-4" box={16}><path d="M0 12h16" strokeWidth="5" /></Ico></button>
          <button aria-label="Restore view"><Ico s="w-4 h-4" box={16} sw={2.4}><path d="M2 5h9v9H2zM5 2h9v9" /></Ico></button>
          <button aria-label="Close view"><Ico s="w-4 h-4" box={16} sw={3.6}><path d="M2 3l11 11M13 3L2 14" /></Ico></button>
        </div>
        <div className="absolute right-[26px] top-[89px]"><ViewCube /></div>
        <button className="absolute right-[91px] top-[286px] w-[69px] h-[26px] rounded bg-[#9a9dab] border border-[#82859a] flex items-center justify-center gap-2 text-[16px] text-[#565a66] font-['Liberation_Sans',sans-serif]">
          WCS <Caret big className="text-[#b9bcc8]" />
        </button>
        <div className="absolute right-[6px] top-[345px]"><NavBar /></div>
        <div className="absolute left-[513px] right-[518px] bottom-0"><CommandLine /></div>
      </div>
    </main>
  )
}

/* ---------- status bar ---------- */

function StatusBtn({ on, name, className = '', children }) {
  return (
    <button aria-label={name} className={`h-[34px] flex items-center justify-center ${on ? 'bg-[#6390c0] text-white' : ''} ${className}`}>
      {children}
    </button>
  )
}

function StatusGroup({ className = '', children }) {
  return <div className={`h-9 bg-[#3c4453] flex items-center justify-around ${className}`}>{children}</div>
}

const needle = 'M12 0c2 5 2 9 3 12l7 10-7-2-3-2-3 2-7 2 7-10c1-3 1-7 3-12z'

function StatusBar() {
  return (
    <footer className="h-[47px] flex items-start text-[#f0f1f3] shrink-0">
      <div className="ml-4 h-9 w-[105px] pt-1 bg-[#3c4453] flex items-center justify-center font-bold text-white [clip-path:polygon(14px_0,100%_0,calc(100%-14px)_100%,0_100%)]">Model</div>
      <div className="h-9 flex items-center pt-1">
        <button className="ml-[11px] mr-[14px]">a3</button>
        <Slash />
        <button aria-label="New layout" className="ml-[15px] mr-[16px]"><Ico s="w-[18px] h-[18px]" box={18} sw={2.4} className="text-[#dcdcdc]"><path d="M9 0v18M0 9h18" /></Ico></button>
        <Slash />
      </div>
      <div className="flex-1 flex justify-end items-center pr-[5px] pt-1 text-[#dcdcdc]">
        <StatusGroup className="w-[72px] text-white">MODEL</StatusGroup>
        <StatusGroup className="w-24 ml-[6px]">
          <StatusBtn name="Grid"><Ico sw={1.5}><path d="M6 0v24M12 0v24M18 0v24M0 6h24M0 12h24M0 18h24" /></Ico></StatusBtn>
          <StatusBtn name="Snap"><Ico s="w-5 h-5" sw={3.6}><path d="M2 3.500h20M2 12h20M2 20.500h20" strokeDasharray="4 4.200" /></Ico></StatusBtn>
          <Caret big />
        </StatusGroup>
        <StatusGroup className="w-9 ml-[6px]">
          <StatusBtn name="Dynamic input"><Ico><path d="M6 1v12M0 7h12" strokeWidth="1.600" /><path d="M10 15h13v7H10z" fill="currentColor" /></Ico></StatusBtn>
        </StatusGroup>
        <StatusGroup className="w-[156px] ml-[2px]">
          <StatusBtn name="Ortho"><Ico><path d="M1 0v23h23M1 16h7v7" /></Ico></StatusBtn>
          <StatusBtn name="Polar"><Ico><circle cx="11" cy="13" r="9.500" /><path d="M11 13h13M11 13l8-11" /></Ico></StatusBtn>
          <Caret big />
          <StatusBtn name="Isodraft"><Ico><path d="M3 2l7 9M14 14l7 8" stroke="#ef6b6b" /><path d="M12 0v10M12 14v10" stroke="#52d17a" /><path d="M10.500 10.500h3v3h-3z" /></Ico></StatusBtn>
          <Caret big />
        </StatusGroup>
        <StatusGroup className="w-24 ml-[2px]">
          <div className="flex gap-[2px]">
            <StatusBtn on name="Object snap tracking" className="w-[34px]"><Ico><path d="M1 22h23M1 22L17 3" /><path d="M8 14l4-4" strokeWidth="4" /></Ico></StatusBtn>
            <StatusBtn on name="Object snap" className="w-[34px]"><Ico><path d="M8 4h16v19H3V9" /><path d="M0 1h6v6H0z" /></Ico></StatusBtn>
          </div>
          <Caret big />
        </StatusGroup>
        <StatusGroup className="w-[158px] ml-[6px]">
          <StatusBtn on name="Annotation visibility" className="w-[34px]"><Ico><path d={needle} transform="translate(-2 1)" fill="currentColor" stroke="none" /><circle cx="19" cy="5" r="3.500" /></Ico></StatusBtn>
          <StatusBtn name="Auto scale"><Ico><path d={needle} transform="translate(-2 1)" fill="currentColor" stroke="none" /><path d="M19 0l-3 6h3l-1 5 5-7h-3l2-4z" fill="currentColor" stroke="none" /></Ico></StatusBtn>
          <StatusBtn name="Annotation"><Ico><path d={needle} transform="translate(0 1)" fill="currentColor" stroke="none" /></Ico></StatusBtn>
          <StatusBtn className="gap-[6px] text-white">1:1 <Caret big /></StatusBtn>
        </StatusGroup>
        <StatusGroup className="w-[60px] ml-[6px]">
          <StatusBtn name="Workspace"><FaCog className="w-6 h-6" /></StatusBtn>
          <Caret big />
        </StatusGroup>
        <StatusGroup className="w-9 ml-[2px]">
          <StatusBtn name="Monitor"><Ico sw={3}><path d="M12 0v24M0 12h24" /></Ico></StatusBtn>
        </StatusGroup>
        <StatusGroup className="w-9 ml-[6px]">
          <StatusBtn name="Isolate objects"><Ico><path d="M1 2h9v9H1z" /><circle cx="19" cy="12" r="5" /><path d="M10 14l5 9H5z" /></Ico></StatusBtn>
        </StatusGroup>
        <StatusGroup className="w-1 ml-1" />
        <StatusGroup className="w-[72px] ml-1">
          <StatusBtn name="Clean screen"><Ico><path d="M1 4h22v17H1z" /><path d="M15 11l5-5M9 14l-5 5" /><path d="M21 5v5l-5-5zM3 20v-5l5 5z" fill="currentColor" stroke="none" /></Ico></StatusBtn>
          <StatusBtn name="Customization"><Ico sw={3}><path d="M0 3h24M0 12h24M0 21h24" /></Ico></StatusBtn>
        </StatusGroup>
      </div>
    </footer>
  )
}

/* ---------- array dialog ---------- */

function PickIcon({ dim }) {
  return (
    <Ico s={dim ? 'w-6 h-6 opacity-40 grayscale' : 'w-6 h-6'}>
      <path d="M7 1v9M2.500 5.500h9" stroke="#1fab54" strokeWidth="3.600" />
      <path d={cursor} transform="translate(9.500 8.500)" fill="#fff" stroke="#111" strokeWidth="1.100" />
    </Ico>
  )
}

function PickBtn({ name, dim, className = '' }) {
  return (
    <button aria-label={name} className={`w-[38px] h-[38px] rounded flex items-center justify-center border ${dim ? 'bg-[#f5f5f5] border-[#e8e8e8]' : 'bg-[#fdfdfd] border-[#d0d0d0]'} ${className}`}>
      <PickIcon dim={dim} />
    </button>
  )
}

const field = 'w-[90px] h-[30px] px-[3px] bg-white border border-[#ececec] border-b-[#868686]'
const pushBtn = 'w-[126px] h-[33px] rounded border border-[#cfcfcf] bg-[#fdfdfd]'
const pushBtnOff = 'w-[126px] h-[33px] rounded border border-[#e6e6e6] bg-[#f6f6f6] text-[#9b9b9b]'

function ArrayDialog() {
  return (
    <div role="dialog" aria-label="Array" className="absolute left-1/2 -translate-x-1/2 ml-px top-[475px] w-[730px] rounded-xl overflow-hidden bg-[#f0f0f0] outline outline-[#4a4f57] shadow-[0_20px_50px_10px_rgba(0,0,0,.35)] font-['Liberation_Sans',sans-serif] text-[16px] leading-[22px] text-black">
      <div className="h-11 bg-[#f2f3f8] flex items-center pl-3 pr-[14px] font-['Open_Sans',sans-serif] text-[17px]">
        <AcadMark className="w-[22px] h-6" />
        <h2 className="ml-[10px] flex-1">Array</h2>
        <button aria-label="Close dialog"><X className="w-[23px] h-[23px]" strokeWidth={1.5} /></button>
      </div>

      <div className="flex pl-[11px] pr-[19px] pb-[21px] gap-[15px]">
        <div className="w-[470px]">
          <div className="h-[55px] flex items-center">
            <label className="w-[250px] flex items-center gap-1"><input type="radio" name="kind" className="w-5 h-5 appearance-none rounded-full border border-[#757575] bg-[#f7f7f7]" />Rectangular Array</label>
            <label className="flex items-center gap-1"><input type="radio" name="kind" defaultChecked className="w-5 h-5 appearance-none rounded-full border-[6px] border-[#005fb8] bg-white" />Polar Array</label>
          </div>

          <div className="border border-t-0 border-[#dcdcdc] px-[19px] pt-[15px] pb-[13px]">
            <div className="flex items-start h-[34px]">
              <span className="w-[126px] pt-1">Center point:</span>
              <label htmlFor="cx" className="w-[23px] pt-1">X:</label>
              <input id="cx" defaultValue="0.500" className={field} />
              <label htmlFor="cy" className="w-7 ml-[12px] pt-1">Y:</label>
              <input id="cy" defaultValue="0.289" className={field} />
              <PickBtn name="Pick center point" className="ml-2" />
            </div>

            <fieldset className="mt-[6px] border border-[#dcdcdc] pb-[18px]">
              <legend className="ml-[5px] px-1 leading-5">Method and values</legend>
              <div className="pt-3 pl-[22px]">
                <label htmlFor="method">Method:</label>
                <div className="relative -ml-[9px] mt-[3px] w-[396px]">
                  <select id="method" className="w-full h-[29px] appearance-none bg-white border border-[#d0d0d0] rounded-[2px] pl-[3px]">
                    <option>Total number of items &amp; Angle to fill</option>
                  </select>
                  <ChevronDown className="absolute right-[5px] top-[6px] w-4 h-4 text-[#606060] pointer-events-none" strokeWidth={1.5} />
                </div>
                <div className="mt-[18px] flex items-start h-[37px]">
                  <label htmlFor="total" className="w-[234px]">Total number of items:</label>
                  <input id="total" defaultValue="3" className={field} />
                </div>
                <div className="flex items-start h-[39px]">
                  <label htmlFor="fill" className="w-[234px]">Angle to fill:</label>
                  <input id="fill" defaultValue="360" className={field} />
                  <PickBtn name="Pick angle to fill" className="ml-[10px]" />
                </div>
                <div className="flex items-start h-[38px]">
                  <label htmlFor="between" className="w-[234px]">Angle between items:</label>
                  <input id="between" disabled defaultValue="120" className="w-[90px] h-[30px] px-[3px] bg-[#f0f0f0] border border-[#fafafa] text-[#7a7a7a]" />
                  <PickBtn name="Pick angle between items" dim className="ml-[10px]" />
                </div>
                <div className="flex mt-2">
                  <div className="w-[30px] flex flex-col items-center">
                    <svg viewBox="0 0 28 42" className="w-7 h-[42px]">
                      <path d="M14 1a13 13 0 0 1 9 21c-2 3-3 4-3 7H8c0-3-1-4-3-7A13 13 0 0 1 14 1z" fill="#f0e040" stroke="#a08a14" strokeWidth="1.600" />
                      <path d="M14 4a9.500 9.500 0 0 1 6 15l-3 9h-6l-3-9A9.500 9.500 0 0 1 14 4z" fill="#fcfcdc" />
                      <path d="M11 5h6l-1 14h-4zM11.500 21h5v5h-5z" fill="#1d3c66" />
                      <path d="M8 30h12v7H8z" fill="#7b7ba8" /><path d="M8 32h12M8 35h12" stroke="#c9c9e4" /><path d="M10 38h8v3h-8z" fill="#4d4d5c" />
                    </svg>
                    <span className="mt-[9px]">Tip</span>
                  </div>
                  <p className="ml-[24px] mt-[2px] leading-5 whitespace-pre-line">{'For angle to fill, a positive value specifies\ncounterclockwise rotation.\u00a0 A negative value\nspecifies clockwise rotation.'}</p>
                </div>
              </div>
            </fieldset>

            <div className="mt-[14px] flex items-end justify-between">
              <label className="flex items-center gap-[5px] leading-5">
                <span className="relative w-5 h-5">
                  <input type="checkbox" defaultChecked className="block w-5 h-5 appearance-none rounded bg-[#005fb8]" />
                  <Ico s="w-5 h-5" box={20} className="absolute inset-0 text-white pointer-events-none"><path d="M5 10.500l3.500 3.500L15 7" /></Ico>
                </span>
                Rotate items as copied
              </label>
              <button className="w-32 h-[35px] pb-1 bg-[#f0f0f0] border border-white border-r-2 border-b-2 border-r-[#6e6e6e] border-b-[#6e6e6e] flex items-center justify-center gap-[13px]">
                <span>M<u>o</u>re</span>
                <Ico s="w-2 h-3" box={12} sw={2.4}><path d="M1-2l5 5 5-5M1 5l5 5 5-5" /></Ico>
              </button>
            </div>
          </div>
        </div>

        <div className="flex-1 flex flex-col pt-[9px]">
          <div className="flex items-start ml-[20px] h-[38px]">
            <button id="sel" aria-label="Select objects" className="w-9 h-[38px] rounded border border-[#d0d0d0] bg-[#fdfdfd] flex items-center justify-center">
              <Ico><path d="M1 1h18v14H1z" stroke="#1fab54" strokeDasharray="3 1.500" fill="#fff" /><path d="M3 3h14v10H3z" fill="#55c47f" stroke="none" /><path d={cursor} transform="translate(14 10)" fill="#fff" stroke="#111" /></Ico>
            </button>
            <label htmlFor="sel" className="ml-[15px] mt-1">Select objects</label>
          </div>
          <p className="mt-2 pl-px">0 objects selected</p>
          <svg viewBox="0 0 215 239" className="mt-4 w-[215px] h-[239px]" fill="none">
            <path d="M0 4h214v232H212v3H0z" fill="#000" />
            <path d="M2.500 .5h212v235H2.500z" fill="#fff" stroke="#000" />
            <circle cx="108" cy="119" r="66.500" stroke="#b8b8b8" />
            <path d="M109.500 38.500l11.500 6-12 21-11.500-5.500zM165 139l-9.500 6 12 21.500 12-6z" stroke="#777" strokeDasharray="2 1" />
            <path d="M37.500 146.500h25v12h-25z" stroke="#000" fill="#fff" />
            <path d="M108.500 115v8M104 119h8" stroke="#000" />
          </svg>
          <div className="mt-[19px] flex flex-col items-end gap-[7px]">
            <button disabled className={pushBtnOff}>OK</button>
            <button className={pushBtn}>Cancel</button>
            <button disabled className={pushBtnOff}>Preview &lt;</button>
            <button className={pushBtn}>Help</button>
          </div>
        </div>
      </div>

      <svg viewBox="0 0 730 569" className="absolute left-0 top-0 w-[730px] h-[569px] pointer-events-none" fill="none" stroke="#e81c1c" strokeWidth="5.500" strokeLinecap="round" strokeLinejoin="round">
        <path d="M173 156c20-2 28-6 44-6h39M303 150h56M276 281h81" />
        <path d="M462 118c-22-14-48-4-64 9-15 12-6 24 14 25 22 1 42 0 50-6 12-11 9-30-4-35-6-3-10-4-16-5" />
      </svg>
    </div>
  )
}

/* ---------- taskbar ---------- */

function Taskbar() {
  return (
    <div className="h-[70px] px-[27px] pb-0.5 flex items-center justify-between text-white text-[17px] shrink-0 bg-[linear-gradient(90deg,#1c222b_0%,#1b232e_21%,#14215a_25%,#14205a_39%,#15263e_42%,#14205a_44%,#1c1c34_51%,#1e1d2a_54%,#13205a_58%,#13205a_62%,#222226_67%,#22221f_72%,#1b222e_75%,#1b212b_100%)]">
      <div className="flex items-center">
        <button aria-label="Start menu" className="ml-1">
          <svg viewBox="0 0 34 34" className="w-[35px] h-[35px]">
            <defs><linearGradient id="win" x1="0" y1="0" x2="1" y2="1"><stop offset="0" stopColor="#8fe0ff" /><stop offset="1" stopColor="#0f93f5" /></linearGradient></defs>
            <path d="M0 0h16v16H0zM18 0h16v16H18zM0 18h16v16H0zM18 18h16v16H18z" fill="url(#win)" />
          </svg>
        </button>
        <label className="ml-[20px] w-[329px] h-12 rounded-full bg-[#3c4149] border border-[#50555c] flex items-center pl-[17px] gap-[14px]">
          <Ico className="text-[#eee]" sw={2.4}><circle cx="11" cy="10" r="8" /><path d="M16 16l6 6" /></Ico>
          <input aria-label="Procurar" placeholder="Procurar" className="w-full bg-transparent text-[19px] placeholder:text-[#cfd1d4]" />
        </label>

        <div className="flex items-center ml-[4px] h-[58px]">
          <button aria-label="Task view" className="w-[66px] flex justify-center"><Ico s="w-[38px] h-[38px]" box={38}><path d="M13 3h22v24H13z" fill="#ececec" stroke="none" /><path d="M3 12h22v23H3z" fill="#8a8a8a" fillOpacity=".8" stroke="none" /></Ico></button>
          <button aria-label="Copilot" className="w-[66px] flex justify-center">
            <svg viewBox="0 0 36 36" className="w-[36px] h-[36px]">
              <defs>
                <linearGradient id="cpA" x1="0" y1="0" x2="0" y2="1"><stop offset="0" stopColor="#1a8ff0" /><stop offset=".6" stopColor="#20b8b0" /><stop offset="1" stopColor="#c8e040" /></linearGradient>
                <linearGradient id="cpB" x1="1" y1="0" x2="0" y2="1"><stop offset="0" stopColor="#a050f0" /><stop offset=".5" stopColor="#f05a90" /><stop offset="1" stopColor="#ffb060" /></linearGradient>
              </defs>
              <path d="M10 3h12c3 0 4 2 5 6h-6c-2 0-3 2-4 5l-3 9c-1 3-2 5-5 5-6 0-9-4-7-11l3-9c1-3 2-5 5-5z" fill="url(#cpA)" />
              <path d="M26 33H14c-3 0-4-2-5-6h6c2 0 3-2 4-5l3-9c1-3 2-5 5-5 6 0 9 4 7 11l-3 9c-1 3-2 5-5 5z" fill="url(#cpB)" />
            </svg>
          </button>
          <button aria-label="Explorer" className="w-[66px] flex justify-center">
            <svg viewBox="0 0 36 34" className="w-9 h-[34px]"><path d="M0 1h11l4 5H0z" fill="#e0a010" /><path d="M0 4h36v27a2 2 0 0 1-2 2H0z" fill="#ffca3c" /><path d="M7 25a4 4 0 0 1 4-4h14a4 4 0 0 1 4 4v8H7z" fill="#1a86d0" /><path d="M12 26h12" stroke="#0b5a96" strokeWidth="2" /></svg>
          </button>
          <button aria-label="AutoCAD" className="w-[66px] flex justify-center"><AcadMark className="w-[34px] h-9" /></button>
          <button aria-label="Photoshop" className="w-[66px] flex justify-center">
            <span className="w-[34px] h-[33px] bg-[#0a0550] border-2 border-[#8fc8ff] text-[#9fd4ff] font-bold text-[17px] leading-[28px]">Ps</span>
          </button>
          <button aria-label="Chrome" className="w-[66px] flex justify-center">
            <svg viewBox="0 0 36 36" className="w-9 h-9"><circle cx="18" cy="18" r="18" fill="#fdc01c" /><path d="M2.400 9A18 18 0 0 1 33.600 9H18L11 22z" fill="#e33b2e" /><path d="M2.400 9A18 18 0 0 0 18 36l8-13.500-15-.5z" fill="#2da44e" /><circle cx="18" cy="18" r="9" fill="#fff" /><circle cx="18" cy="18" r="7" fill="#2a7de8" /></svg>
          </button>
          <button aria-label="Spotify" className="w-[66px] flex justify-center"><FaSpotify className="w-9 h-9 text-[#1ed760] bg-black rounded-full" /></button>
          <button aria-label="Discord" className="w-[66px] flex justify-center"><span className="w-9 h-9 rounded-full bg-[#5865f2] flex items-center justify-center"><FaDiscord className="w-6 h-6" /></span></button>
          <button aria-label="AutoCAD running" className="relative mx-[3px] w-[60px] h-[60px] rounded-md bg-white/10 border border-white/5 flex justify-center items-center">
            <AcadMark className="w-[34px] h-9" />
            <span className="absolute bottom-0 w-6 h-[5px] rounded-full bg-[#4cc2ff]" />
          </button>
          <button aria-label="Notepad++" className="relative w-[66px] h-[60px] flex justify-center items-center">
            <svg viewBox="0 0 34 34" className="w-[34px] h-[34px]"><path d="M1 2h23l3 28-25 3z" fill="#f2f5ee" /><path d="M3 14l21-2 2 16-23 3z" fill="#7ed321" /><path d="M4 20c5-6 9 2 13-4s6 2 8-2M6 26c5 2 9-4 15-1" fill="none" stroke="#1c5a14" strokeWidth="2.400" /><circle cx="14" cy="11" r="3" fill="#dff0c8" stroke="#333" /><path d="M2 4h22" stroke="#8a93b0" strokeWidth="2" strokeDasharray="1.500 1.500" /><path d="M31 1l2 2-9 22-3 3 1-5z" fill="#e8b04a" stroke="#6a4a1a" strokeWidth=".8" /></svg>
            <span className="absolute bottom-0 w-[9px] h-[5px] rounded-full bg-[#a3a8b8]" />
          </button>
        </div>
      </div>

      <div className="flex items-center">
        <div className="relative w-[38px] h-[46px] mr-[10px]">
          <svg viewBox="0 0 38 28" className="absolute bottom-0 w-[38px] h-7"><circle cx="28" cy="9" r="7" fill="#f59a2a" /><path d="M9 28a8 8 0 0 1-1-16 11 11 0 0 1 20-1 8.600 8.600 0 0 1 1 17z" fill="#a9c8f8" /></svg>
          <span className="absolute -top-[5px] left-[17px] w-6 h-6 rounded-full bg-[#ff99a4] text-black text-center leading-6 text-[16px]">4</span>
        </div>
        <div className="w-[194px] leading-[25px]">
          <p>21°C</p>
          <p className="text-[#c8cacd]">Ger. Nublado</p>
        </div>
        <button aria-label="Hidden icons"><ChevronUp className="w-6 h-6" /></button>
        <svg viewBox="0 0 26 22" className="ml-[22px] w-[26px] h-[22px]"><path d="M5 17a5 5 0 0 1 0-10 8 8 0 0 1 14 0 5 5 0 0 1 1 10z" fill="#b8b8b8" /><circle cx="17" cy="15" r="7" fill="#d9232e" /><path d="M14.500 12.500l5 5M19.500 12.500l-5 5" stroke="#fff" strokeWidth="1.800" /></svg>
        <Wifi className="ml-[22px] w-6 h-6" />
        <VolumeX className="ml-[11px] w-6 h-6" strokeWidth={1.7} />
        <svg viewBox="0 0 26 22" className="ml-[11px] w-[26px] h-[22px]" fill="none" stroke="#fff" strokeWidth="1.800"><path d="M9 5h10a3 3 0 0 1 3 3v8a3 3 0 0 1-3 3H6a3 3 0 0 1-3-3v-4M24 10v4" /><path d="M10 8h9v8H6v-3z" fill="#fff" stroke="none" /><path d="M6 0L1 8h4l-2 5 6-8H5z" fill="#fff" stroke="none" /></svg>
        <div className="ml-[28px] mr-[2px] text-right leading-[25px]">
          <p>12:47</p>
          <p>07/10/2025</p>
        </div>
      </div>
    </div>
  )
}

export default function App() {
  return (
    <div className="relative h-screen flex flex-col overflow-hidden bg-[#171b21] font-['Open_Sans',sans-serif] text-[17px]">
      <div className="flex-1 min-h-0 mx-[2px] border border-[#0c93dc] bg-[#222933] flex flex-col">
        <TitleBar />
        <RibbonTabs />
        <Ribbon />
        <DocTabs />
        <div className="h-[6px] mx-[3px] bg-[#3c4453] shrink-0" />
        <Canvas />
        <div className="h-[6px] mx-[3px] bg-[#3c4453] shrink-0" />
        <StatusBar />
      </div>
      <div className="h-[2px] bg-[#464b52] shrink-0" />
      <Taskbar />
      <ArrayDialog />
    </div>
  )
}
